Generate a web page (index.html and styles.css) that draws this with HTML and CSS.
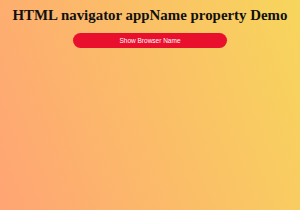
FILE: index.html
```html
<!DOCTYPE html>
<html lang="en">
<head>
  <meta charset="UTF-8">
  <meta name="viewport" content="width=device-width, initial-scale=1.0">
  <title>navigator appName</title>
  <link rel="stylesheet" href="styles.css">
</head>
<body>
    <h1>HTML navigator appName property Demo</h1>
    <button class="show-btn">Show Browser Name</button>
</body>
</html>
```
FILE: styles.css
```css
html {
  height: 100%;
}
body {
  margin: 0;
  min-height: 100%;
  background: linear-gradient(70deg, #ffa474, #f7d65c);
  font-family: 'Liberation Serif', serif;
  text-align: center;
  display: flex;
  flex-direction: column;
  align-items: center;
}
h1 {
  font-size: 14.9px;
  line-height: 18px;
  color: #111;
  margin: 6px 0 9px;
  white-space: nowrap;
}
.show-btn {
  width: 154px;
  height: 15px;
  padding: 0;
  border: none;
  border-radius: 8px;
  background: #e8102d;
  color: #fff;
  font-family: 'Liberation Sans', Arial, sans-serif;
  font-size: 6.5px;
  cursor: pointer;
}
```
